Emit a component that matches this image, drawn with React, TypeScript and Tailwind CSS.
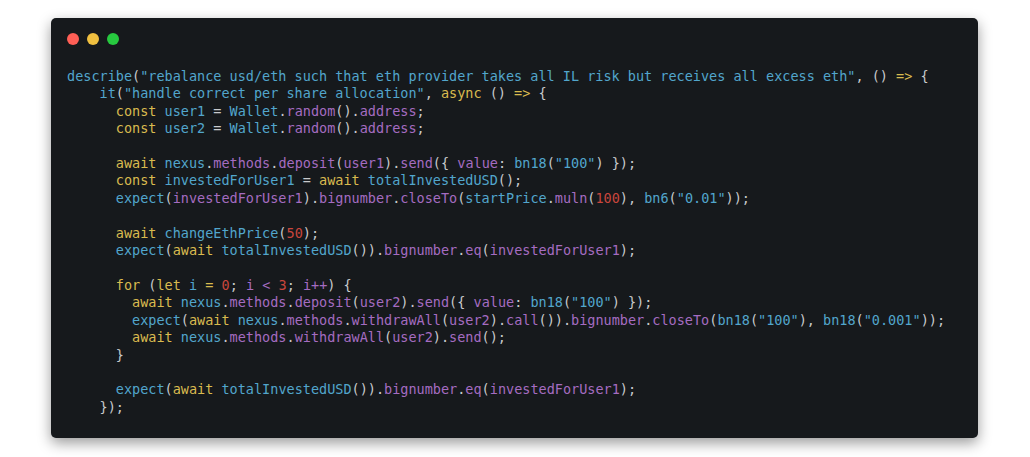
import React from 'react';

type Tok = [string, string];

const c = 'text-[#52a6cc]';
const p = 'text-[#a56cc1]';
const y = 'text-[#d9bb4f]';
const g = 'text-[#c8cacc]';
const r = 'text-[#c9463d]';

const lines: Tok[][] = [
  [[c, 'describe'], [g, '('], [c, '"rebalance usd/eth such that eth provider takes all IL risk but receives all excess eth"'], [g, ', () '], [y, '=>'], [g, ' {']],
  [[g, '    '], [c, 'it'], [g, '('], [c, '"handle correct per share allocation"'], [g, ', '], [y, 'async'], [g, ' () '], [y, '=>'], [g, ' {']],
  [[g, '      '], [y, 'const'], [g, ' '], [c, 'user1'], [g, ' = '], [c, 'Wallet'], [g, '.'], [p, 'random'], [g, '().'], [p, 'address'], [g, ';']],
  [[g, '      '], [y, 'const'], [g, ' '], [c, 'user2'], [g, ' = '], [c, 'Wallet'], [g, '.'], [p, 'random'], [g, '().'], [p, 'address'], [g, ';']],
  [],
  [[g, '      '], [y, 'await'], [g, ' '], [c, 'nexus'], [g, '.'], [p, 'methods'], [g, '.'], [p, 'deposit'], [g, '('], [p, 'user1'], [g, ').'], [p, 'send'], [g, '({ '], [p, 'value'], [g, ': '], [c, 'bn18'], [g, '('], [c, '"100"'], [g, ') });']],
  [[g, '      '], [y, 'const'], [g, ' '], [c, 'investedForUser1'], [g, ' = '], [y, 'await'], [g, ' '], [c, 'totalInvestedUSD'], [g, '();']],
  [[g, '      '], [c, 'expect'], [g, '('], [p, 'investedForUser1'], [g, ').'], [p, 'bignumber'], [g, '.'], [p, 'closeTo'], [g, '('], [c, 'startPrice'], [g, '.'], [p, 'muln'], [g, '('], [r, '100'], [g, '), '], [c, 'bn6'], [g, '('], [c, '"0.01"'], [g, '));']],
  [],
  [[g, '      '], [y, 'await'], [g, ' '], [c, 'changeEthPrice'], [g, '('], [r, '50'], [g, ');']],
  [[g, '      '], [c, 'expect'], [g, '('], [y, 'await'], [g, ' '], [c, 'totalInvestedUSD'], [g, '()).'], [p, 'bignumber'], [g, '.'], [p, 'eq'], [g, '('], [p, 'investedForUser1'], [g, ');']],
  [],
  [[g, '      '], [y, 'for'], [g, ' ('], [y, 'let'], [g, ' '], [c, 'i'], [g, ' '], [y, '='], [g, ' '], [r, '0'], [g, '; '], [p, 'i'], [g, ' '], [p, '<'], [g, ' '], [r, '3'], [g, '; '], [p, 'i++'], [g, ') {']],
  [[g, '        '], [y, 'await'], [g, ' '], [c, 'nexus'], [g, '.'], [p, 'methods'], [g, '.'], [p, 'deposit'], [g, '('], [p, 'user2'], [g, ').'], [p, 'send'], [g, '({ '], [p, 'value'], [g, ': '], [c, 'bn18'], [g, '('], [c, '"100"'], [g, ') });']],
  [[g, '        '], [c, 'expect'], [g, '('], [y, 'await'], [g, ' '], [c, 'nexus'], [g, '.'], [p, 'methods'], [g, '.'], [p, 'withdrawAll'], [g, '('], [p, 'user2'], [g, ').'], [p, 'call'], [g, '()).'], [p, 'bignumber'], [g, '.'], [p, 'closeTo'], [g, '('], [c, 'bn18'], [g, '('], [c, '"100"'], [g, '), '], [c, 'bn18'], [g, '('], [c, '"0.001"'], [g, '));']],
  [[g, '        '], [y, 'await'], [g, ' '], [c, 'nexus'], [g, '.'], [p, 'methods'], [g, '.'], [p, 'withdrawAll'], [g, '('], [p, 'user2'], [g, ').'], [p, 'send'], [g, '();']],
  [[g, '      }']],
  [],
  [[g, '      '], [c, 'expect'], [g, '('], [y, 'await'], [g, ' '], [c, 'totalInvestedUSD'], [g, '()).'], [p, 'bignumber'], [g, '.'], [p, 'eq'], [g, '('], [p, 'investedForUser1'], [g, ');']],
  [[g, '    });']],
];

const App: React.FC = () => {
  return (
    <div className="w-[1030px] h-[457px] bg-white pt-[18px] pl-[51px]">
      <div className="w-[927px] h-[420px] bg-[#16191c] rounded-[5px] shadow-[0_5px_14px_rgba(0,0,0,0.4)] pl-[16px] pt-[15px]">
        <div className="flex gap-[8px]">
          <span className="w-[12px] h-[12px] rounded-full bg-[#ff5f56]" />
          <span className="w-[12px] h-[12px] rounded-full bg-[#f0c040]" />
          <span className="w-[12px] h-[12px] rounded-full bg-[#27c93f]" />
        </div>
        <pre className="mt-[23px] font-['DejaVu_Sans_Mono',monospace] text-[13.5px] leading-[17.42px]">
          {lines.map((line, i) => (
            <div key={i} className="h-[17.42px] whitespace-pre">
              {line.map(([cls, text], j) => (
                <span key={j} className={cls}>
                  {text}
                </span>
              ))}
            </div>
          ))}
        </pre>
      </div>
    </div>
  );
};

export default App;
